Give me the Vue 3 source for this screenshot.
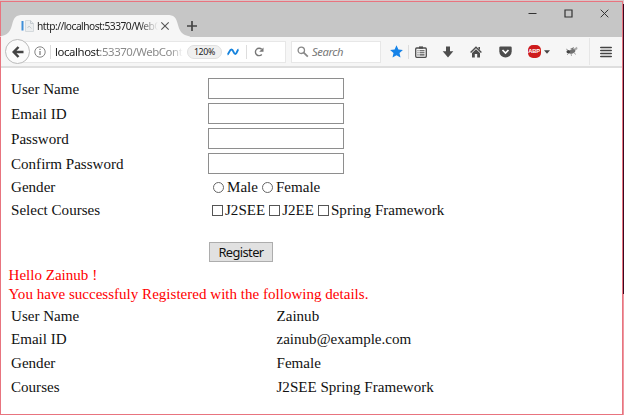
<script setup>
const fields = ['User Name', 'Email ID', 'Password', 'Confirm Password']
const courses = ['J2SEE', 'J2EE', 'Spring Framework']
const details = [
  ['User Name', 'Zainub'],
  ['Email ID', 'zainub@example.com'],
  ['Gender', 'Female'],
  ['Courses', 'J2SEE Spring Framework'],
]
</script>

<template>
  <div class="screen">
    <div class="window">
      <header class="titlebar">
        <div class="tab">
          <svg class="tab-shape" width="190" height="23" viewBox="0 0 190 23">
            <path d="M0 22.5C8 21 10 18 12 11C14 3 16 1 23 1H167C174 1 176 3 178 11C180 18 182 21 190 22.5V23H0Z" fill="#f6f6f6" />
          </svg>
          <svg class="favicon" width="14" height="12" viewBox="0 0 14 12">
            <path d="M1.5 1V10.5" stroke="#3f8fd8" stroke-width="2" />
            <path d="M4.5 .5H9.5L12.5 3.500V11.500H4.500Z" fill="#eceeef" stroke="#d4d9dc" />
            <path d="M9.500 .5V3.500H12.500M6.500 8L8 6L10.500 8.500" fill="none" stroke="#c5cbd0" />
          </svg>
          <span class="tab-title">http://localhost:53370/WebC</span>
          <svg class="tab-close" width="10" height="10" viewBox="0 0 10 10"><path d="M1.300 1.300L8.700 8.700M8.700 1.300L1.300 8.700" stroke="#555" stroke-width="1.100" /></svg>
        </div>
        <svg class="plus" width="10" height="10" viewBox="0 0 10 10"><path d="M5 0V10M0 5H10" stroke="#444" stroke-width="1.700" /></svg>
        <div class="controls">
          <svg width="9" height="9" viewBox="0 0 9 9"><path d="M.5 4.500H8.500" stroke="#333" /></svg>
          <svg width="9" height="9" viewBox="0 0 9 9"><path d="M1 1H8V8H1Z" fill="none" stroke="#333" stroke-width="1.200" /></svg>
          <svg width="9" height="9" viewBox="0 0 9 9"><path d="M.7 .7L8.300 8.300M8.300 .7L.7 8.300" stroke="#333" /></svg>
        </div>
      </header>

      <nav class="toolbar">
        <div class="back">
          <svg width="12" height="12" viewBox="0 0 12 12"><path d="M6.500 1L1.700 6L6.500 11M2.500 6H11.500" fill="none" stroke="#444" stroke-width="2.500" /></svg>
        </div>
        <div class="address">
          <svg class="info" width="12" height="12" viewBox="0 0 12 12"><circle cx="6" cy="6" r="5.200" fill="none" stroke="#777" stroke-width=".9" /><path d="M6 5V9M6 2.800V4" stroke="#777" stroke-width="1.200" /></svg>
          <i class="rule identity"></i>
          <span class="url"><b>localhost</b>:53370/WebContr</span>
          <span class="zoom">120%</span>
          <svg class="wave" width="12" height="8" viewBox="0 0 12 8"><path d="M.5 6.500C2 6 2.500 1.500 4.500 1.500S6.500 6 8.300 6S10 2 11.500 1.500" fill="none" stroke="#1683dd" stroke-width="1.900" /></svg>
          <i class="rule"></i>
          <svg class="reload" width="10" height="10" viewBox="0 0 10 10"><path d="M7.800 7.500A3.700 3.700 0 1 1 7.700 2.300" fill="none" stroke="#777" stroke-width="1.400" /><path d="M9.500 .5V4.800H5.200Z" fill="#777" /></svg>
        </div>
        <div class="search">
          <svg width="12" height="12" viewBox="0 0 12 12"><circle cx="4.300" cy="4.300" r="3.200" fill="none" stroke="#888" stroke-width="1.300" /><path d="M6.700 6.700L10.800 10.600" stroke="#888" stroke-width="1.800" /></svg>
          <span>Search</span>
        </div>
        <div class="cell star"><svg width="13" height="13" viewBox="0 0 13 13"><path d="M6.500 .3L8.400 4.400L12.900 4.900L9.500 8L10.500 12.500L6.500 10.200L2.500 12.500L3.500 8L.1 4.900L4.600 4.400Z" fill="#1683e8" /></svg></div>
        <i class="rule"></i>
        <div class="cell list"><svg width="12" height="12" viewBox="0 0 12 12"><rect x=".7" y="2" width="10.600" height="9.300" rx="1" fill="none" stroke="#4d4d4d" stroke-width="1.300" /><path d="M4 1.500H8" stroke="#4d4d4d" stroke-width="2.200" /><path d="M2.500 4.700H3.500M4.500 4.700H9.500M2.500 6.800H3.500M4.500 6.800H9.500M2.500 8.900H3.500M4.500 8.900H9.500" stroke="#4d4d4d" stroke-width="1.100" /></svg></div>
        <div class="cell"><svg width="12" height="12" viewBox="0 0 12 12"><path d="M4 .5H8V5.300H11.300L6 11.500L.7 5.300H4Z" fill="#4d4d4d" /></svg></div>
        <div class="cell"><svg width="12" height="12" viewBox="0 0 12 12"><path d="M.6 6.500L6 1.200L11.400 6.500" fill="none" stroke="#4d4d4d" stroke-width="1.400" /><path d="M2 7L6 3.200L10 7V11.500H7.200V8H4.800V11.500H2ZM8.400 1H10V4L8.400 2.500Z" fill="#4d4d4d" /></svg></div>
        <div class="cell pocket"><svg width="13" height="12" viewBox="0 0 13 12"><path d="M1.500 .5H11.500Q12.700 .5 12.700 1.700V5.300A6.200 6.200 0 0 1 .3 5.300V1.700Q.3 .5 1.500 .5Z" fill="#4d4d4d" /><path d="M3.500 4L6.500 7L9.500 4" fill="none" stroke="#fff" stroke-width="1.700" /></svg></div>
        <div class="cell abp">
          <span class="badge">ABP</span>
          <svg width="6" height="4" viewBox="0 0 6 4"><path d="M0 .3H6L3 3.700Z" fill="#444" /></svg>
        </div>
        <div class="cell fly"><svg width="14" height="11" viewBox="0 0 14 11"><path d="M7 4L12 .8L12.500 3L8 6Z" fill="#aaa" /><path d="M5 3L9 1L8 4Z" fill="#777" /><ellipse cx="7" cy="5.500" rx="3.400" ry="2" transform="rotate(-20 7 5.500)" fill="#707070" /><circle cx="3.300" cy="5.800" r="1.800" fill="#444" /><path d="M4 7L2 9M6 7L6.500 10M8.500 6.500L11 8.500M3 4L1 3" stroke="#888" stroke-width=".7" /></svg></div>
        <i class="rule tall"></i>
        <div class="cell menu"><svg width="12" height="12" viewBox="0 0 12 12"><path d="M.8 1.500H11.200M.8 4.500H11.200M.8 7.500H11.200M.8 10.500H11.200" stroke="#444" stroke-width="1.700" stroke-linecap="round" /></svg></div>
      </nav>

      <main class="page">
        <form class="form" @submit.prevent>
          <template v-for="f in fields" :key="f">
            <label>{{ f }}</label>
            <input class="field" :type="f.includes('Password') ? 'password' : 'text'" />
          </template>
          <span>Gender</span>
          <div class="options">
            <i class="radio"></i><span class="male">Male</span>
            <i class="radio"></i><span>Female</span>
          </div>
          <span>Select Courses</span>
          <div class="options checks">
            <span v-for="c in courses" :key="c" class="check"><i class="box"></i>{{ c }}</span>
          </div>
          <button class="register">Register</button>
        </form>
        <p class="message">Hello Zainub !<br />You have successfuly Registered with the following details.</p>
        <div class="details">
          <template v-for="d in details" :key="d[0]">
            <span>{{ d[0] }}</span><span>{{ d[1] }}</span>
          </template>
        </div>
      </main>
    </div>
    <aside class="edge"><i class="edge-top"></i><i class="edge-dark"></i></aside>
  </div>
</template>

<style>
body { margin: 0; overflow: hidden; background: #fff; }
</style>

<style scoped>
* { box-sizing: border-box; }
svg { display: block; flex: none; }
.screen { display: flex; width: 624px; height: 415px; border-top: 1px solid #d8c5c7; }
.window { width: 623px; height: 414px; border: 1px solid #e8747f; background: #fff; }
.titlebar { display: flex; height: 35px; background: #c6c6c6; }
.tab { position: relative; display: flex; align-items: center; width: 190px; height: 23px; margin: 12px 0 0 -1px; padding-left: 21px; }
.tab-shape { position: absolute; left: 0; top: 0; }
.favicon { position: relative; }
.tab-title { position: relative; width: 121px; margin-left: 2px; white-space: nowrap; font: 10.2px/14px "Noto Sans", sans-serif; letter-spacing: -0.5px; color: #222; -webkit-mask-image: linear-gradient(90deg, #000 84%, transparent); mask-image: linear-gradient(90deg, #000 84%, transparent); }
.tab-close { position: relative; margin-left: 2px; }
.plus { margin: 19px 0 0 -3px; }
.controls { display: flex; gap: 27px; margin: 7px 0 0 auto; padding-right: 13px; }
.toolbar { display: flex; align-items: center; height: 31px; background: #f6f6f6; border-bottom: 2px solid #dedede; }
.back { position: relative; z-index: 1; display: flex; align-items: center; justify-content: center; flex: none; width: 25px; height: 25px; margin-left: 4px; border: 1px solid #bbb; border-radius: 50%; background: #fbfbfb; }
.address { display: flex; align-items: center; flex: none; width: 270px; height: 22px; margin-left: -14px; padding-left: 18px; border: 1px solid #e7e7e7; background: #fff; }
.info { margin-left: -1px; }
.url { width: 136px; height: 17px; padding-left: 4px; white-space: nowrap; font: 11.4px/17px "Noto Sans", sans-serif; letter-spacing: -0.42px; color: #8a8a8a; -webkit-mask-image: linear-gradient(90deg, #000 88%, transparent 97%); mask-image: linear-gradient(90deg, #000 88%, transparent 97%); }
.url b { font-weight: 400; color: #222; }
.zoom { width: 35px; height: 14px; border: 1px solid #e0e0e0; border-radius: 7px; background: #f0f0f0; text-align: center; font: 8.8px/12px "Noto Sans", sans-serif; letter-spacing: -0.3px; color: #222; }
.wave { margin-left: 5px; }
.rule { flex: none; width: 1px; height: 14px; background: #ddd; }
.address .rule { margin-left: 7px; }
.address .identity { margin-left: 4px; }
.reload { margin-left: 7px; }
.search { display: flex; align-items: center; flex: none; width: 90px; height: 22px; margin-left: 5px; padding-left: 5px; border: 1px solid #e7e7e7; background: #fff; font: italic 11.2px/16px "Noto Sans", sans-serif; letter-spacing: -0.4px; color: #777; }
.search span { margin-left: 3px; }
.cell { display: flex; align-items: center; justify-content: center; flex: none; width: 28px; height: 24px; }
.star { width: 26px; margin-left: 2px; }
.star + .rule { margin-left: -1px; }
.list { width: 26px; margin-left: -1px; }
.pocket { margin-left: 1px; }
.abp { width: 31px; margin-left: 4px; gap: 3px; }
.badge { width: 13px; height: 13px; border-radius: 5px; background: #ce1c1c; text-align: center; font: bold 5.8px/13px "Liberation Sans", sans-serif; color: #fff; letter-spacing: -0.2px; }
.fly { width: 30px; margin-left: 3px; }
.rule.tall { height: 27px; margin-left: 2px; background: #e6e6e6; }
.menu { width: 32px; }
.page { padding: 8px 0 0 7px; font: 15.07px/19px "Liberation Serif", serif; color: #111; }
.form { display: grid; grid-template-columns: 197px 1fr; grid-template-rows: repeat(4, 25px) 23px 23px 20px 20px; align-items: center; padding-left: 3px; }
.form label { padding-top: 1px; }
.field { width: 136px; height: 21px; padding: 0 3px; border: 1px solid #8e8e8e; border-radius: 0; background: #fff; outline: 0; }
.options { display: flex; align-items: center; padding-left: 5px; }
.checks { padding-left: 4px; }
.radio { width: 11px; height: 11px; margin-right: 3px; border: 1px solid #666; border-radius: 50%; }
.male { margin-right: 4px; }
.check { display: flex; align-items: center; margin-right: 4px; }
.box { width: 11px; height: 11px; margin-right: 2px; border: 1px solid #555; }
.register { grid-column: 2; grid-row: 8; width: 64px; height: 20px; margin-left: 1px; padding: 0; border: 1px solid #adadad; background: #e1e1e1; font: 12.9px/17px "Noto Sans", sans-serif; letter-spacing: -0.6px; color: #111; }
.message { margin: 4px 0 0; padding-left: .5px; color: #f00; }
.details { display: grid; grid-template-columns: 265.500px 1fr; grid-template-rows: 23px 23px 24px 24px; align-items: center; padding: 1px 0 0 3px; }
.edge { display: flex; flex-direction: column; width: 1px; background: #ee9aa3; }
.edge-top { height: 3px; background: #dfc8ca; }
.edge-dark { height: 290px; background: #3a0820; }
</style>
